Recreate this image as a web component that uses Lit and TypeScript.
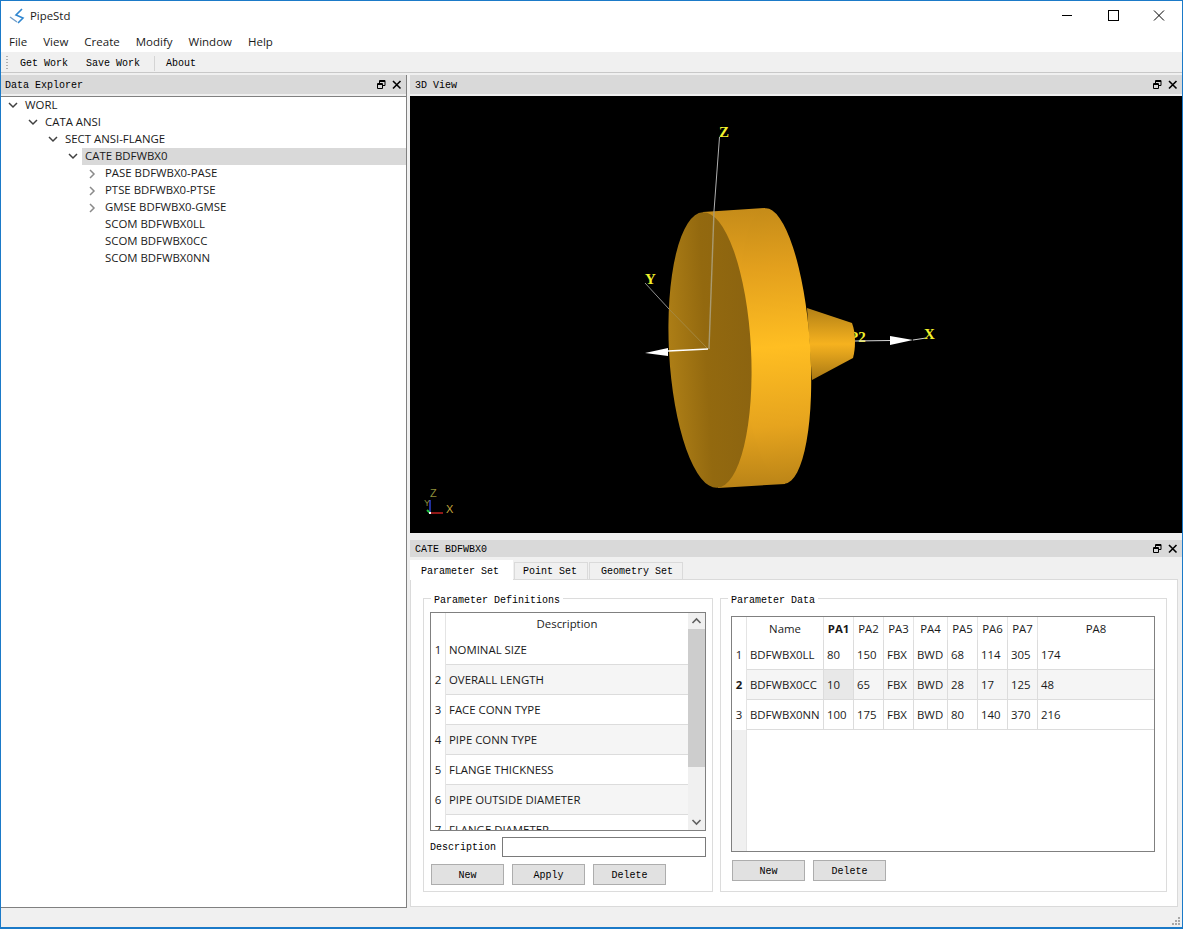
import { LitElement, html, css, svg } from "lit";
import { customElement } from "lit/decorators.js";

const treeRows = [
  { label: "WORL", depth: 0, arrow: "open" },
  { label: "CATA ANSI", depth: 1, arrow: "open" },
  { label: "SECT ANSI-FLANGE", depth: 2, arrow: "open" },
  { label: "CATE BDFWBX0", depth: 3, arrow: "open", selected: true },
  { label: "PASE BDFWBX0-PASE", depth: 4, arrow: "closed" },
  { label: "PTSE BDFWBX0-PTSE", depth: 4, arrow: "closed" },
  { label: "GMSE BDFWBX0-GMSE", depth: 4, arrow: "closed" },
  { label: "SCOM BDFWBX0LL", depth: 4, arrow: "" },
  { label: "SCOM BDFWBX0CC", depth: 4, arrow: "" },
  { label: "SCOM BDFWBX0NN", depth: 4, arrow: "" },
];

const definitions = [
  "NOMINAL SIZE",
  "OVERALL LENGTH",
  "FACE CONN TYPE",
  "PIPE CONN TYPE",
  "FLANGE THICKNESS",
  "PIPE OUTSIDE DIAMETER",
  "FLANGE DIAMETER",
];

const columns = ["Name", "PA1", "PA2", "PA3", "PA4", "PA5", "PA6", "PA7", "PA8"];

const dataRows = [
  ["BDFWBX0LL", "80", "150", "FBX", "BWD", "68", "114", "305", "174"],
  ["BDFWBX0CC", "10", "65", "FBX", "BWD", "28", "17", "125", "48"],
  ["BDFWBX0NN", "100", "175", "FBX", "BWD", "80", "140", "370", "216"],
];

const dockIcons = html`
  <svg class="dock-icons" width="30" height="12" viewBox="0 0 30 12">
    <path d="M4.5 4.5h5v5h-5zM4.5 5.5h5M6.5 4.5v-3h5.500v5h-2.500M6.500 2.500h5.500" fill="none" stroke="#000" />
    <path d="M20 2l7.500 7.500M27.500 2l-7.500 7.500" fill="none" stroke="#000" stroke-width="1.600" />
  </svg>
`;

const chevronDown = html`
  <svg width="10" height="7" viewBox="0 0 10 7"><path d="M1 1l4 4 4-4" fill="none" stroke="#404040" stroke-width="1.500" /></svg>
`;

const chevronRight = html`
  <svg width="7" height="10" viewBox="0 0 7 10"><path d="M1 1l4 4-4 4" fill="none" stroke="#8a8a8a" stroke-width="1.500" /></svg>
`;

const scene = svg`
  <defs>
    <linearGradient id="body" gradientUnits="userSpaceOnUse" x1="0" y1="110" x2="0" y2="392">
      <stop offset="0" stop-color="#c48b19" />
      <stop offset="0.22" stop-color="#e3a01d" />
      <stop offset="0.5" stop-color="#ffbe22" />
      <stop offset="0.78" stop-color="#e6a41e" />
      <stop offset="1" stop-color="#b98317" />
    </linearGradient>
    <linearGradient id="cone" x1="0" y1="0" x2="0" y2="1">
      <stop offset="0" stop-color="#b28016" />
      <stop offset="0.5" stop-color="#f6b21f" />
      <stop offset="1" stop-color="#a87814" />
    </linearGradient>
    <linearGradient id="face" x1="0" y1="0" x2="1" y2="0">
      <stop offset="0" stop-color="#ad7e16" />
      <stop offset="0.45" stop-color="#93690f" />
      <stop offset="1" stop-color="#8c6410" />
    </linearGradient>
  </defs>
  <text x="439" y="246" font-family="'Liberation Serif', serif" font-weight="700" font-size="15" fill="#f2f22c">P2</text>
  <path d="M397 212L442 227Q445 235 445 245Q445 255 443 262L402 284Z" fill="url(#cone)" />
  <path d="M293 116L355 112L375 388L308 392Z" fill="url(#body)" />
  <ellipse cx="365" cy="250" rx="35" ry="138" transform="rotate(-4 365 250)" fill="url(#body)" />
  <ellipse cx="300" cy="254" rx="41" ry="138" transform="rotate(-3 300 254)" fill="url(#face)" />
  <path d="M309.500 41L304 115" stroke="#b0b0b0" stroke-width="1" fill="none" />
  <path d="M304 115L299 253" stroke="#a99a70" stroke-width="1.400" fill="none" />
  <path d="M235 187L259 213" stroke="#909090" stroke-width="1" fill="none" />
  <path d="M259 213L298 253" stroke="#a58840" stroke-width="1" fill="none" />
  <path d="M298 253L258 255" stroke="#fff" stroke-width="1.600" fill="none" />
  <path d="M235 257L258 252L258 260Z" fill="#fff" />
  <path d="M445 245L480 244.500" stroke="#d8d8d8" stroke-width="1" fill="none" />
  <path d="M480 240L503 244L480 249Z" fill="#fff" />
  <path d="M503 244L516 242" stroke="#d0d0d0" stroke-width="1" fill="none" />
  <g font-family="'Liberation Serif', serif" font-weight="700" font-size="15" fill="#f2f22c">
    <text x="309" y="41">Z</text>
    <text x="235" y="188">Y</text>
    <text x="514" y="243">X</text>
  </g>
  <path d="M20 417L20 404" stroke="#2b3fd0" stroke-width="1.500" fill="none" />
  <path d="M20 417L33 417" stroke="#c02020" stroke-width="1.500" fill="none" />
  <path d="M20 417L17 414" stroke="#20c040" stroke-width="2" fill="none" />
  <rect x="19" y="416" width="2" height="2" fill="#fff" />
  <g font-family="'Liberation Sans', sans-serif" font-size="11">
    <text x="20" y="401" fill="#8f8f3a">Z</text>
    <text x="14" y="410" fill="#8f8f3a" font-size="9">Y</text>
    <text x="36" y="417" fill="#c4a63c">X</text>
  </g>
`;

@customElement("app-root")
export class AppRoot extends LitElement {
  static styles = css`
    :host {
      display: block;
      width: 1183px;
      height: 929px;
      font-family: "Open Sans", "Noto Sans", sans-serif;
      font-size: 11.4px;
      color: #1a1a1a;
    }
    .window {
      width: 100%;
      height: 100%;
      box-sizing: border-box;
      border: 1px solid #1b7ac8;
      border-bottom-width: 2px;
      background: #f0f0f0;
      display: flex;
      flex-direction: column;
      overflow: hidden;
    }
    .mono {
      font-family: "Liberation Mono", "DejaVu Sans Mono", monospace;
      font-size: 10px;
      color: #000;
    }

    .titlebar {
      height: 29px;
      background: #fff;
      display: flex;
      align-items: center;
      flex: none;
    }
    .logo {
      margin-left: 8px;
    }
    .app-name {
      margin-left: 4px;
      font-size: 11.4px;
    }
    .caption {
      margin-left: auto;
      display: flex;
    }
    .caption svg {
      display: block;
      width: 46px;
      height: 29px;
    }

    .menubar {
      height: 22px;
      background: #fff;
      display: flex;
      align-items: center;
      padding-left: 8px;
      gap: 16px;
      flex: none;
      font-size: 11.5px;
    }

    .toolbar {
      height: 21px;
      box-sizing: border-box;
      padding-top: 3px;
      background: #f0f0f0;
      border-bottom: 1px solid #c8c8c8;
      display: flex;
      align-items: center;
      flex: none;
      padding-left: 5px;
    }
    .grip {
      width: 2px;
      height: 15px;
      margin-right: 12px;
      background: repeating-linear-gradient(#b0b0b0 0 1px, transparent 1px 3px);
    }
    .tool {
      margin-right: 18px;
    }
    .tool-sep {
      width: 1px;
      height: 15px;
      background: #d4d4d4;
      margin: 0 11px 0 -4px;
    }

    .workspace {
      flex: 1;
      min-height: 0;
      display: flex;
      padding-top: 2px;
    }
    .left {
      width: 405px;
      flex: none;
      display: flex;
      flex-direction: column;
      border-right: 1px solid #808080;
    }
    .left .dock-title {
      padding-left: 4px;
    }
    .right {
      flex: 1;
      min-width: 0;
      margin-left: 3px;
      display: flex;
      flex-direction: column;
    }
    .dock-title {
      height: 19px;
      flex: none;
      background: #d9d9d9;
      display: flex;
      align-items: center;
      padding-left: 5px;
      justify-content: space-between;
      margin-bottom: 2px;
    }
    .dock-title span {
      padding-top: 2px;
    }
    .dock-icons {
      margin-right: 3px;
    }

    .tree {
      flex: 1;
      background: #fff;
      border-top: 1px solid #808080;
      border-bottom: 1px solid #808080;
      font-size: 11.4px;
    }
    .tree-row {
      height: 17px;
      display: flex;
      align-items: center;
    }
    .arrow {
      width: 15px;
      flex: none;
      display: flex;
      justify-content: center;
      align-items: center;
    }
    .tree-label {
      flex: 1;
      margin-left: 2px;
      padding-left: 3px;
      height: 17px;
      line-height: 16px;
    }
    .tree-label.selected {
      background: #d9d9d9;
    }

    .view {
      height: 437px;
      flex: none;
      background: #000;
    }
    .view svg {
      display: block;
    }
    .detail {
      flex: 1;
      min-height: 0;
      margin-top: 7px;
      display: flex;
      flex-direction: column;
    }
    .detail .dock-title {
      height: 17px;
      margin-bottom: 0;
    }
    .tabs {
      display: flex;
      align-items: flex-end;
      gap: 1px;
      height: 22px;
      flex: none;
      position: relative;
      z-index: 1;
    }
    .tab {
      height: 16px;
      line-height: 18px;
      background: #f0f0f0;
      border: 1px solid #dadada;
      border-bottom: none;
      padding: 0 10px 0 8px;
    }
    .tab.geometry {
      padding: 0 9px 0 11px;
    }
    .tab.active {
      height: 19px;
      line-height: 21px;
      background: #fff;
      padding: 0 13px 0 10px;
      border-color: #fff;
      margin-bottom: -1px;
    }
    .pane {
      flex: 1;
      min-height: 0;
      background: #fff;
      border: 1px solid #dadada;
      margin-right: 4px;
      margin-bottom: 1px;
      display: flex;
      gap: 7px;
      padding: 18px 10px 14px 12px;
    }
    .group {
      position: relative;
      border: 1px solid #dcdcdc;
      box-sizing: border-box;
      display: flex;
      flex-direction: column;
    }
    .group.defs {
      width: 290px;
      padding: 13px 6px 0 6px;
    }
    .group.data {
      flex: 1;
      padding: 17px 11px 0 10px;
    }
    .legend {
      position: absolute;
      left: 7px;
      top: -6px;
      padding: 2px 3px 0;
      background: #fff;
      line-height: 12px;
    }

    .table {
      border: 1px solid #808080;
      box-sizing: border-box;
      position: relative;
      overflow: hidden;
      background: #fff;
    }
    .defs .table {
      height: 219px;
      display: grid;
      grid-template-columns: 15px 1fr 17px;
      grid-template-rows: minmax(0, 1fr);
    }
    .row-heads {
      border-right: 1px solid #e4e4e4;
    }
    .head-cell {
      height: 22px;
      line-height: 22px;
      text-align: center;
    }
    .row-head {
      height: 30px;
      line-height: 30px;
      text-align: center;
      box-sizing: border-box;
    }
    .def-row {
      height: 30px;
      line-height: 29px;
      padding-left: 3px;
      border-bottom: 1px solid #dcdcdc;
      box-sizing: border-box;
    }
    .def-row.alt {
      background: #f5f5f5;
    }
    .scroll {
      background: #f0f0f0;
      display: flex;
      flex-direction: column;
      align-items: center;
      min-height: 0;
    }
    .scroll svg {
      flex: none;
      height: 16px;
    }
    .thumb {
      width: 100%;
      height: 138px;
      background: #cdcdcd;
      flex: none;
    }
    .scroll-space {
      flex: 1;
    }

    .form-row {
      display: flex;
      align-items: center;
      height: 20px;
      margin-top: 6px;
      justify-content: space-between;
    }
    .form-input {
      width: 204px;
      height: 20px;
      box-sizing: border-box;
      border: 1px solid #7a7a7a;
      background: #fff;
    }
    .buttons {
      display: flex;
      gap: 8px;
      margin-top: 7px;
      padding-left: 1px;
    }
    .data .buttons {
      margin-top: 8px;
      padding-left: 1px;
    }
    .btn {
      width: 73px;
      height: 21px;
      box-sizing: border-box;
      border: 1px solid #adadad;
      background: #e1e1e1;
      text-align: center;
      line-height: 21px;
    }

    .data .table {
      height: 236px;
      display: grid;
      grid-template-columns: 15px 77px 30px 30px 30px 34px 30px 30px 30px 1fr;
      grid-template-rows: 23px 30px 30px 30px 1fr;
    }
    .data .cell {
      line-height: 29px;
      padding-left: 3px;
      border-right: 1px solid #dcdcdc;
      border-bottom: 1px solid #dcdcdc;
      box-sizing: border-box;
      white-space: nowrap;
      overflow: hidden;
    }
    .data .cell.alt {
      background: #f5f5f5;
    }
    .data .cell.current {
      background: #e8e8e8;
    }
    .data .cell.last {
      border-right: none;
    }
    .data .th {
      line-height: 23px;
      text-align: center;
      border-right: 1px solid #e4e4e4;
      box-sizing: border-box;
    }
    .data .th.last {
      border-right: none;
    }
    .data .rh {
      line-height: 30px;
      text-align: center;
      border-right: 1px solid #e4e4e4;
      box-sizing: border-box;
    }
    .bold {
      font-weight: 700;
    }
    .data .rh-rest {
      background: #f0f0f0;
      border-right: 1px solid #e4e4e4;
    }
    .data .empty {
      grid-column: 2 / -1;
    }

    .statusbar {
      height: 19px;
      flex: none;
      background: #f0f0f0;
      display: flex;
      justify-content: flex-end;
      align-items: flex-end;
    }
    .size-grip {
      display: block;
      margin: 0 1px 1px 0;
    }
  `;

  private renderTree() {
    return treeRows.map(
      (row) => html`
        <div class="tree-row" style="padding-left:${4 + row.depth * 20}px">
          <span class="arrow">${row.arrow === "open" ? chevronDown : row.arrow === "closed" ? chevronRight : ""}</span>
          <span class="tree-label ${row.selected ? "selected" : ""}">${row.label}</span>
        </div>
      `
    );
  }

  private renderDefinitions() {
    return html`
      <div class="table">
        <div class="row-heads">
          <div class="head-cell"></div>
          ${definitions.map((_, i) => html`<div class="row-head">${i + 1}</div>`)}
        </div>
        <div>
          <div class="head-cell">Description</div>
          ${definitions.map((d, i) => html`<div class="def-row ${i % 2 ? "alt" : ""}">${d}</div>`)}
        </div>
        <div class="scroll">
          <svg width="17" height="16" viewBox="0 0 17 16"><path d="M4.500 10l4-4 4 4" fill="none" stroke="#606060" stroke-width="1.600" /></svg>
          <div class="thumb"></div>
          <div class="scroll-space"></div>
          <svg width="17" height="16" viewBox="0 0 17 16"><path d="M4.500 6l4 4 4-4" fill="none" stroke="#606060" stroke-width="1.600" /></svg>
        </div>
      </div>
    `;
  }

  private renderData() {
    return html`
      <div class="table">
        <div class="th"></div>
        ${columns.map(
          (c, i) => html`<div class="th ${i === 1 ? "bold" : ""} ${i === 8 ? "last" : ""}">${c}</div>`
        )}
        ${dataRows.map(
          (row, r) => html`
            <div class="rh ${r === 1 ? "bold" : ""}">${r + 1}</div>
            ${row.map((v, c) => {
              const cls = [
                "cell",
                r === 1 ? "alt" : "",
                r === 1 && c === 1 ? "current" : "",
                c === 8 ? "last" : "",
              ].join(" ");
              return html`<div class=${cls}>${v}</div>`;
            })}
          `
        )}
        <div class="rh-rest"></div>
        <div class="empty"></div>
      </div>
    `;
  }

  render() {
    return html`
      <div class="window">
        <div class="titlebar">
          <svg class="logo" width="17" height="17" viewBox="0 0 17 17">
            <path d="M1 10l7 5" fill="none" stroke="#6f9cc8" stroke-width="1.400" />
            <path d="M13 2L7 8l7 3-5 5" fill="none" stroke="#2f86d0" stroke-width="1.600" />
          </svg>
          <span class="app-name">PipeStd</span>
          <div class="caption">
            <svg viewBox="0 0 46 29"><path d="M18 14.500h10" stroke="#000" fill="none" /></svg>
            <svg viewBox="0 0 46 29"><rect x="18.500" y="9.500" width="10" height="10" stroke="#000" fill="none" /></svg>
            <svg viewBox="0 0 46 29"><path d="M18 9.500l10 10M28 9.500l-10 10" stroke="#000" fill="none" /></svg>
          </div>
        </div>
        <div class="menubar">
          <span>File</span><span>View</span><span>Create</span><span>Modify</span><span>Window</span><span>Help</span>
        </div>
        <div class="toolbar mono">
          <span class="grip"></span>
          <span class="tool">Get Work</span>
          <span class="tool">Save Work</span>
          <span class="tool-sep"></span>
          <span class="tool">About</span>
        </div>
        <div class="workspace">
          <div class="left">
            <div class="dock-title mono"><span>Data Explorer</span>${dockIcons}</div>
            <div class="tree">${this.renderTree()}</div>
          </div>
          <div class="right">
            <div class="dock-title mono"><span>3D View</span>${dockIcons}</div>
            <div class="view">
              <svg width="772" height="437" viewBox="0 0 772 437">${scene}</svg>
            </div>
            <div class="detail">
              <div class="dock-title mono"><span>CATE BDFWBX0</span>${dockIcons}</div>
              <div class="tabs mono">
                <div class="tab active">Parameter Set</div>
                <div class="tab">Point Set</div>
                <div class="tab geometry">Geometry Set</div>
              </div>
              <div class="pane">
                <div class="group defs">
                  <span class="legend mono">Parameter Definitions</span>
                  ${this.renderDefinitions()}
                  <div class="form-row">
                    <span class="mono">Description</span>
                    <div class="form-input"></div>
                  </div>
                  <div class="buttons mono">
                    <div class="btn">New</div>
                    <div class="btn">Apply</div>
                    <div class="btn">Delete</div>
                  </div>
                </div>
                <div class="group data">
                  <span class="legend mono">Parameter Data</span>
                  ${this.renderData()}
                  <div class="buttons mono">
                    <div class="btn">New</div>
                    <div class="btn">Delete</div>
                  </div>
                </div>
              </div>
            </div>
          </div>
        </div>
        <div class="statusbar">
          <svg class="size-grip" width="10" height="10" viewBox="0 0 10 10" fill="#a8a8a8">
            <rect x="7" y="1" width="2" height="2" /><rect x="4" y="4" width="2" height="2" /><rect x="7" y="4" width="2" height="2" />
            <rect x="1" y="7" width="2" height="2" /><rect x="4" y="7" width="2" height="2" /><rect x="7" y="7" width="2" height="2" />
          </svg>
        </div>
      </div>
    `;
  }
}
